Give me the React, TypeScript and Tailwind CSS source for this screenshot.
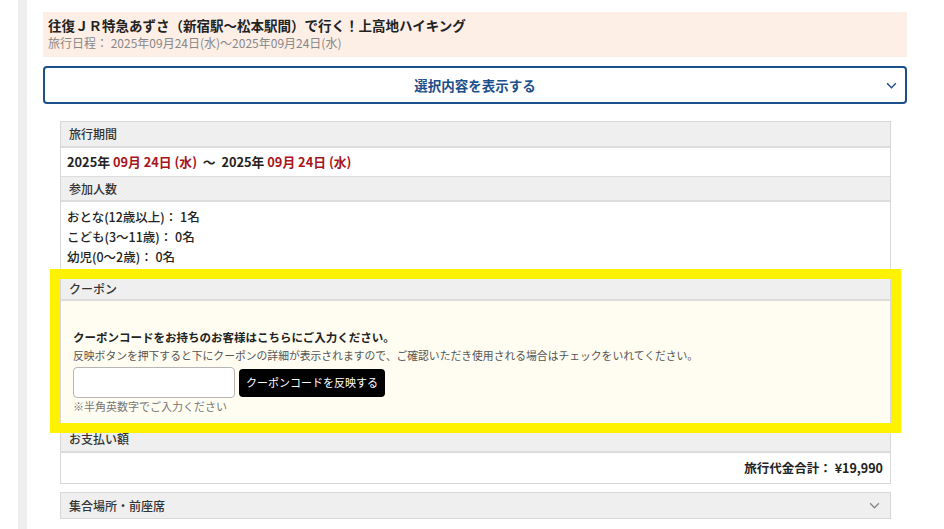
import React from 'react';

const Chevron = ({ className }: { className?: string }) => (
  <svg viewBox="0 0 12 8" className={className} fill="none" stroke="currentColor" strokeWidth="1.6">
    <polyline points="1,1.5 6,6.5 11,1.5" />
  </svg>
);

const SectionHead = ({ children, className = '' }: { children: React.ReactNode; className?: string }) => (
  <div className={`bg-[#efefef] border-b-2 border-[#dcdcdc] px-2 text-[12px] text-[#333] font-medium flex items-center ${className}`}>
    {children}
  </div>
);

export default function App() {
  return (
    <div className="flex min-h-[529px] bg-white text-[#222]" style={{ fontFamily: '"Noto Sans CJK JP", "DejaVu Sans", sans-serif' }}>
      <div className="w-[18px] shrink-0" />
      <div className="w-[9px] shrink-0 bg-[#eeeeee]" />
      <div className="ml-4 w-[864px] pt-3">
        {/* Tour title */}
        <div className="bg-[#fdeee6] px-[5px] pt-[4px] pb-[5px] h-[45px]">
          <div className="text-[13.5px] font-bold leading-[18px] text-[#222]">往復ＪＲ特急あずさ（新宿駅～松本駅間）で行く！上高地ハイキング</div>
          <div className="text-[12px] leading-[18px] text-[#888]">旅行日程： 2025年09月24日(水)～2025年09月24日(水)</div>
        </div>

        {/* Toggle */}
        <button className="mt-[9px] w-full h-[38px] border-2 border-[#1d4f8a] rounded-[4px] relative flex items-center justify-center text-[13.5px] font-bold text-[#1d4f8a]">
          選択内容を表示する
          <Chevron className="absolute right-[8px] top-[14px] w-[11px] h-[7px] text-[#1d4f8a]" />
        </button>

        {/* Details */}
        <div className="ml-[17px] mr-[16px] mt-[17px]">
          <div className="border border-[#d8d8d8] border-b-0">
            <SectionHead className="h-[26px]">旅行期間</SectionHead>
            <div className="h-[29px] px-[6px] flex items-center text-[12.8px] font-bold border-b border-[#dcdcdc]">
              2025年&nbsp;<span className="text-[#a8141c]">09月 24日 (水)</span>&nbsp;&nbsp;～&nbsp;&nbsp;2025年&nbsp;<span className="text-[#a8141c]">09月 24日 (水)</span>
            </div>
            <SectionHead className="h-[25px]">参加人数</SectionHead>
            <div className="px-[6px] pt-[5px] pb-[12px] text-[12.5px] font-medium leading-[20px]">
              <div>おとな(12歳以上)： 1名</div>
              <div>こども(3～11歳)： 0名</div>
              <div>幼児(0～2歳)： 0名</div>
            </div>
          </div>

          {/* Coupon (highlighted) */}
          <div className="relative z-10 outline-10 outline-solid outline-[#fff200] border-x border-[#d8d8d8]">
            <SectionHead className="h-[22px]">クーポン</SectionHead>
            <div className="bg-[#fffdf2] h-[122px] px-[12px] pt-[27px]">
              <div className="text-[11.5px] font-bold leading-[18px]">クーポンコードをお持ちのお客様はこちらにご入力ください。</div>
              <div className="text-[10.8px] leading-[18px] text-[#555]">反映ボタンを押下すると下にクーポンの詳細が表示されますので、ご確認いただき使用される場合はチェックをいれてください。</div>
              <div className="mt-[3px] flex items-center gap-[4px]">
                <input type="text" className="w-[162px] h-[31px] bg-white border border-[#b5b5b5] rounded-[4px]" />
                <button className="h-[28px] w-[146px] bg-black text-white text-[11px] rounded-[4px]">クーポンコードを反映する</button>
              </div>
              <div className="text-[11px] leading-[16px] text-[#777]">※半角英数字でご入力ください</div>
            </div>
          </div>

          <div className="border border-[#d8d8d8] border-t-0">
            <SectionHead className="h-[30px] items-end pb-[3px]">お支払い額</SectionHead>
            <div className="h-[30px] px-[7px] flex items-center justify-end text-[12.5px] font-bold">旅行代金合計： ¥19,990</div>
          </div>

          <div className="mt-[8px] h-[27px] border border-[#d8d8d8] bg-[#efefef] px-2 flex items-center justify-between text-[12px] font-medium text-[#333]">
            集合場所・前座席
            <Chevron className="w-[11px] h-[7px] mr-[2px] text-[#888]" />
          </div>
        </div>
      </div>
    </div>
  );
}
